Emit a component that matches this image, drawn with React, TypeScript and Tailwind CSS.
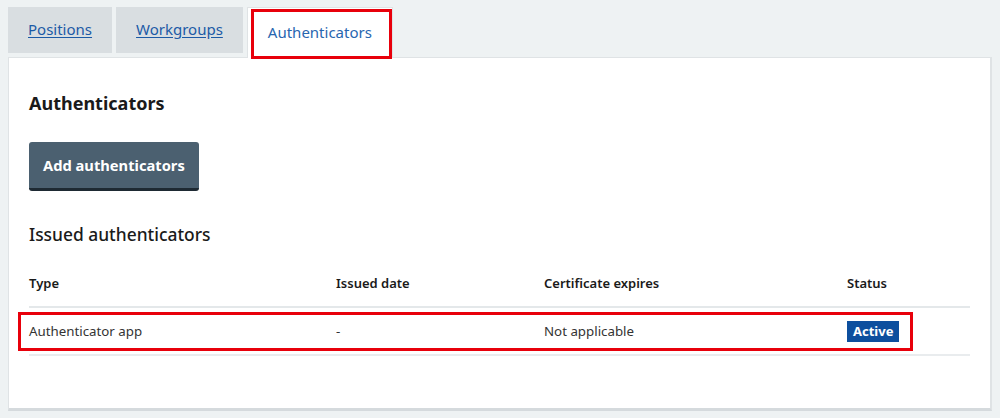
const font = { fontFamily: '"Noto Sans", "Open Sans", sans-serif' }

const columns = ["Type", "Issued date", "Certificate expires", "Status"]

function Tabs() {
  return (
    <div className="flex items-start gap-1 pl-2 pt-[7px]">
      <a className="flex h-[46px] items-center bg-[#d9dee1] px-5 pb-[2px] text-[15px] text-[#1c5aa6] underline underline-offset-2">
        Positions
      </a>
      <a className="flex h-[46px] items-center bg-[#d9dee1] px-5 pb-[2px] text-[15px] text-[#1c5aa6] underline underline-offset-2">
        Workgroups
      </a>
      <div className="relative -mb-px flex h-[51px] items-center border border-b-0 border-[#dfe3e5] bg-white px-5 pb-[2px] text-[15px] text-[#2866b0]">
        Authenticators
        {/* highlight */}
        <div className="pointer-events-none absolute -bottom-[1px] left-[3px] right-0 top-[1px] border-[3px] border-[#e8000b]" />
      </div>
    </div>
  )
}

export default function App() {
  return (
    <div className="min-h-[418px] w-[1000px] bg-[#eef2f3] text-[#1a1a1a]" style={font}>
      <Tabs />
      <div className="mx-2 h-[354px] border border-r-2 border-b-[3px] border-[#dfe3e5] border-b-[#d5dadd] bg-white px-5 pt-[33px]">
        <h2 className="text-[18px] font-bold leading-6">Authenticators</h2>
        <button className="mt-[27px] h-[49px] rounded-[3px] border-b-[3px] border-[#1e2a33] bg-[#4b6070] px-[14px] text-[14.7px] font-bold text-white">
          Add authenticators
        </button>
        <h3 className="mt-[31px] text-[17.4px] font-medium leading-6">Issued authenticators</h3>

        <div className="mt-[14px] text-[13px]">
          <div className="grid grid-cols-[307px_208px_303px_1fr] border-b-2 border-[#e4e8ea] py-[13px] font-semibold leading-5">
            {columns.map((c) => (
              <div key={c}>{c}</div>
            ))}
          </div>
          <div className="relative grid h-[48px] grid-cols-[307px_208px_303px_1fr] items-center border-b-2 border-[#e9ecee] text-[13.3px] leading-5 text-[#333]">
            <div>Authenticator app</div>
            <div>-</div>
            <div>Not applicable</div>
            <div>
              <span className="inline-block bg-[#0d4f9e] px-[6px] text-[13px] font-bold leading-[21px] text-white">
                Active
              </span>
            </div>
            {/* highlight */}
            <div className="pointer-events-none absolute -left-[11px] right-[57px] top-[4px] bottom-[3px] border-[3px] border-[#e8000b]" />
          </div>
        </div>
      </div>
    </div>
  )
}
